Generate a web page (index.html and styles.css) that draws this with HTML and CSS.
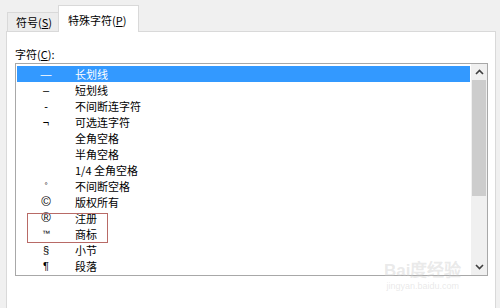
FILE: index.html
```html
<!DOCTYPE html>
<html lang="zh-CN">
<head>
  <meta charset="UTF-8">
  <title>特殊字符</title>
  <link rel="stylesheet" href="styles.css">
</head>
<body>
  <div class="tabs">
    <div class="tab">符号(<u>S</u>)</div>
    <div class="tab active">特殊字符(<u>P</u>)</div>
  </div>

  <div class="panel">
    <div class="label">字符(<u>C</u>):</div>
    <div class="listbox">
      <div class="rows">
        <div class="row selected"><span class="sym">—</span><span class="name">长划线</span></div>
        <div class="row"><span class="sym">–</span><span class="name">短划线</span></div>
        <div class="row"><span class="sym">-</span><span class="name">不间断连字符</span></div>
        <div class="row"><span class="sym">¬</span><span class="name">可选连字符</span></div>
        <div class="row"><span class="sym"></span><span class="name">全角空格</span></div>
        <div class="row"><span class="sym"></span><span class="name">半角空格</span></div>
        <div class="row"><span class="sym"></span><span class="name">1/4 全角空格</span></div>
        <div class="row"><span class="sym small">°</span><span class="name">不间断空格</span></div>
        <div class="row"><span class="sym big">©</span><span class="name">版权所有</span></div>
        <div class="row"><span class="sym big">®</span><span class="name">注册</span></div>
        <div class="row"><span class="sym small">™</span><span class="name">商标</span></div>
        <div class="row"><span class="sym">§</span><span class="name">小节</span></div>
        <div class="row"><span class="sym">¶</span><span class="name">段落</span></div>
      </div>
      <div class="scrollbar">
        <div class="arrow">
          <svg width="9" height="6" viewBox="0 0 9 6"><path d="M1 5 L4.5 1.5 L8 5" fill="none" stroke="#404040" stroke-width="1.6"/></svg>
        </div>
        <div class="thumb"></div>
        <div class="track"></div>
        <div class="arrow">
          <svg width="9" height="6" viewBox="0 0 9 6"><path d="M1 1 L4.5 4.5 L8 1" fill="none" stroke="#404040" stroke-width="1.6"/></svg>
        </div>
      </div>
      <div class="mark"></div>
    </div>
  </div>

  <div class="watermark">
    <div class="wm-logo">Bai<span class="paw">度</span>经验</div>
    <div class="wm-url">jingyan.baidu.com</div>
  </div>
</body>
</html>
```

FILE: styles.css
```css
body {
  margin: 0;
  background: #f0f0f0;
  font-family: "Noto Sans CJK SC", "Microsoft YaHei", sans-serif;
  font-size: 11px;
  color: #000;
  height: 308px;
  overflow: hidden;
  position: relative;
}

u {
  text-decoration: underline;
  text-underline-offset: 1px;
}

.tabs {
  display: flex;
  align-items: flex-end;
  height: 31px;
  padding-left: 7px;
}

.tab {
  box-sizing: border-box;
  height: 19px;
  width: 52px;
  padding-left: 8px;
  line-height: 19px;
  border: 1px solid #d9d9d9;
  border-bottom: none;
  background: #ececec;
}

.tab.active {
  height: 27px;
  width: 81px;
  margin-left: -1px;
  margin-bottom: -1px;
  padding-left: 9px;
  line-height: 28px;
  background: #fff;
  position: relative;
  z-index: 1;
}

.panel {
  box-sizing: border-box;
  margin-left: 6px;
  width: 490px;
  height: 290px;
  background: #fff;
  border: 1px solid #d9d9d9;
  padding: 14px 0 0 8px;
}

.label {
  line-height: 16px;
  height: 17px;
}

.listbox {
  box-sizing: border-box;
  width: 473px;
  height: 213px;
  border: 1px solid #a8a8a8;
  display: flex;
  position: relative;
}

.rows {
  flex: 1;
  padding: 2px 0 0 1px;
}

.row {
  display: flex;
  height: 16px;
  line-height: 16px;
}

.row.selected {
  background: #3399ff;
  color: #fff;
}

.sym {
  width: 58px;
  text-align: center;
  font-family: "Liberation Sans", sans-serif;
  font-size: 11px;
}

.sym.small {
  font-size: 8px;
}

.sym.big {
  font-size: 13px;
}

.scrollbar {
  width: 16px;
  margin-left: 1px;
  background: #f0f0f0;
  display: flex;
  flex-direction: column;
}

.arrow {
  height: 16px;
  display: flex;
  align-items: center;
  justify-content: center;
}

.thumb {
  height: 116px;
  background: #cdcdcd;
  margin: 0 1px;
}

.track {
  flex: 1;
}

.mark {
  position: absolute;
  left: 11px;
  top: 149px;
  width: 79px;
  height: 28px;
  border: 1px solid #b86a66;
}

.watermark {
  position: absolute;
  left: 384px;
  top: 262px;
  color: rgba(200, 200, 200, 0.4);
  font-family: "Liberation Sans", sans-serif;
  text-align: center;
}

.wm-logo {
  font-size: 17px;
  font-weight: bold;
  line-height: 18px;
}

.wm-url {
  font-size: 9px;
  line-height: 12px;
}
```
